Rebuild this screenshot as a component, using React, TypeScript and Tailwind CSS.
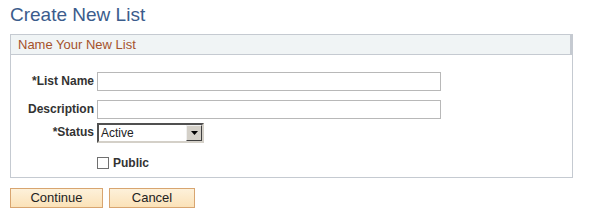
import React from "react";

export default function App() {
  const font = { fontFamily: '"Liberation Sans", Arial, sans-serif' };
  return (
    <div className="w-[595px] h-[214px] bg-white" style={font}>
      <div className="pl-[10px] pt-[4px]">
        <h1 className="text-[19px] leading-[22px] text-[#3b5c8c] font-normal">Create New List</h1>
        <div className="mt-[8px] w-[563px] border border-[#c5cad1]">
          <div className="h-[20px] bg-[#f0f4f5] border-b border-[#c5cad1] border-r-[3px] border-r-[#c5cad1] -mr-[1px] pl-[7px] text-[13px] leading-[20px] text-[#a5522b]">
            Name Your New List
          </div>
          <div className="pt-[17px] pb-[6px] grid grid-cols-[83px_1fr] gap-x-[3px] items-center text-[12px] font-bold text-[#333333]">
            <div className="text-right leading-[19px]">*List Name</div>
            <div className="h-[19px] w-[344px] border border-[#b8b8b8] bg-white" />
            <div className="mt-[9px] text-right leading-[19px]">Description</div>
            <div className="mt-[9px] h-[19px] w-[344px] border border-[#b8b8b8] bg-white" />
            <div className="mt-[4px] text-right leading-[18px] self-start">*Status</div>
            <div className="mt-[4px] h-[20px] w-[107px] flex border-2 border-[#505050] border-b-[#d4d0c8] border-r-[#d4d0c8] bg-white">
              <div className="flex-1 text-[12px] font-normal leading-[16px] pl-[2px] text-[#222]">Active</div>
              <div className="w-[16px] h-[16px] bg-[#d4d0c8] border border-[#f0f0f0] border-r-[#404040] border-b-[#404040] flex items-center justify-center">
                <svg width="7" height="4" viewBox="0 0 7 4"><path d="M0 0h7L3.5 4z" fill="#000" /></svg>
              </div>
            </div>
            <div className="mt-[12px]" />
            <div className="mt-[12px] flex items-center h-[16px]">
              <div className="w-[12px] h-[12px] border border-[#707070] bg-white" />
              <span className="ml-[4px] text-[12px] leading-[16px]">Public</span>
            </div>
          </div>
        </div>
        <div className="mt-[10px] flex gap-[6px]">
          <button className="w-[93px] h-[20px] border border-[#d8a570] bg-gradient-to-b from-[#fdf1da] to-[#fbe2b8] text-[13px] leading-[18px] text-[#222]">Continue</button>
          <button className="w-[86px] h-[20px] border border-[#d8a570] bg-gradient-to-b from-[#fdf1da] to-[#fbe2b8] text-[13px] leading-[18px] text-[#222]">Cancel</button>
        </div>
      </div>
    </div>
  );
}
